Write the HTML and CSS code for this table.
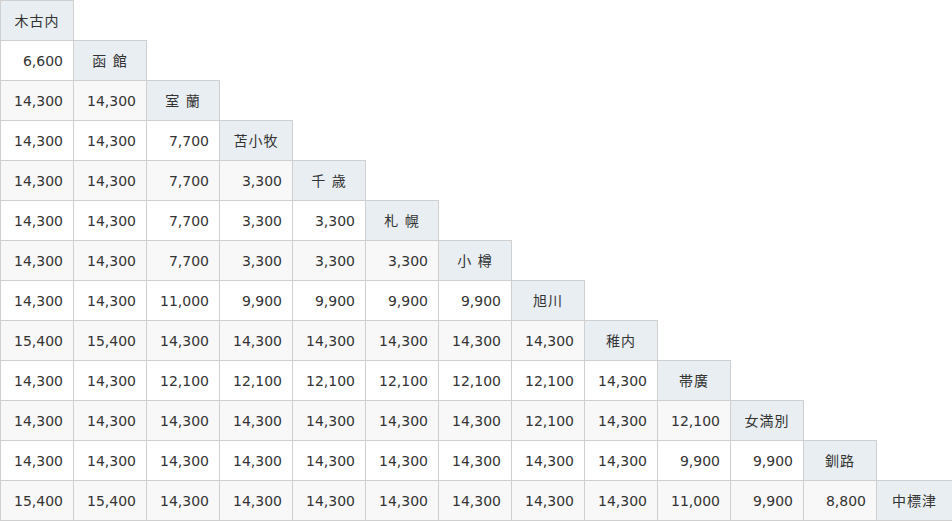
FILE: index.html
```html
<!DOCTYPE html>
<html lang="ja">
<head>
<meta charset="utf-8">
<title>運賃表</title>
<link rel="stylesheet" href="styles.css">
</head>
<body>
<table class="fare">
<colgroup>
<col class="c"><col class="c"><col class="c"><col class="c"><col class="c"><col class="c"><col class="c"><col class="c"><col class="c"><col class="c"><col class="c"><col class="c"><col class="c last">
</colgroup>
<tbody>
<tr><th>木古内</th></tr>
<tr><td>6,600</td><th>函 館</th></tr>
<tr><td>14,300</td><td>14,300</td><th>室 蘭</th></tr>
<tr><td>14,300</td><td>14,300</td><td>7,700</td><th>苫小牧</th></tr>
<tr><td>14,300</td><td>14,300</td><td>7,700</td><td>3,300</td><th>千 歳</th></tr>
<tr><td>14,300</td><td>14,300</td><td>7,700</td><td>3,300</td><td>3,300</td><th>札 幌</th></tr>
<tr><td>14,300</td><td>14,300</td><td>7,700</td><td>3,300</td><td>3,300</td><td>3,300</td><th>小 樽</th></tr>
<tr><td>14,300</td><td>14,300</td><td>11,000</td><td>9,900</td><td>9,900</td><td>9,900</td><td>9,900</td><th>旭川</th></tr>
<tr><td>15,400</td><td>15,400</td><td>14,300</td><td>14,300</td><td>14,300</td><td>14,300</td><td>14,300</td><td>14,300</td><th>稚内</th></tr>
<tr><td>14,300</td><td>14,300</td><td>12,100</td><td>12,100</td><td>12,100</td><td>12,100</td><td>12,100</td><td>12,100</td><td>14,300</td><th>帯廣</th></tr>
<tr><td>14,300</td><td>14,300</td><td>14,300</td><td>14,300</td><td>14,300</td><td>14,300</td><td>14,300</td><td>12,100</td><td>14,300</td><td>12,100</td><th>女満別</th></tr>
<tr><td>14,300</td><td>14,300</td><td>14,300</td><td>14,300</td><td>14,300</td><td>14,300</td><td>14,300</td><td>14,300</td><td>14,300</td><td>9,900</td><td>9,900</td><th>釧路</th></tr>
<tr><td>15,400</td><td>15,400</td><td>14,300</td><td>14,300</td><td>14,300</td><td>14,300</td><td>14,300</td><td>14,300</td><td>14,300</td><td>11,000</td><td>9,900</td><td>8,800</td><th>中標津</th></tr>
</tbody>
</table>
</body>
</html>
```
FILE: styles.css
```css
html, body {
  margin: 0;
  padding: 0;
  overflow: hidden;
  background: #fff;
}

.fare {
  border-collapse: collapse;
  table-layout: fixed;
  width: 953px;
  font-family: "DejaVu Sans", "Noto Sans CJK JP", sans-serif;
  font-size: 14px;
  color: #333;
}

.fare .c {
  width: 73px;
}

.fare .last {
  width: 76px;
}

.fare tr {
  height: 40px;
}

.fare td,
.fare th {
  border: 1px solid #cfcfcf;
  padding: 0 10px;
  height: 39px;
  box-sizing: border-box;
  line-height: 1;
  white-space: nowrap;
  vertical-align: middle;
}

.fare td {
  text-align: right;
  background: #fff;
}

.fare tr:nth-child(odd) td {
  background: #f8f8f8;
}

.fare th {
  text-align: center;
  font-weight: normal;
  background: #e8eef1;
  padding: 0 4px;
  letter-spacing: 1px;
}
```
